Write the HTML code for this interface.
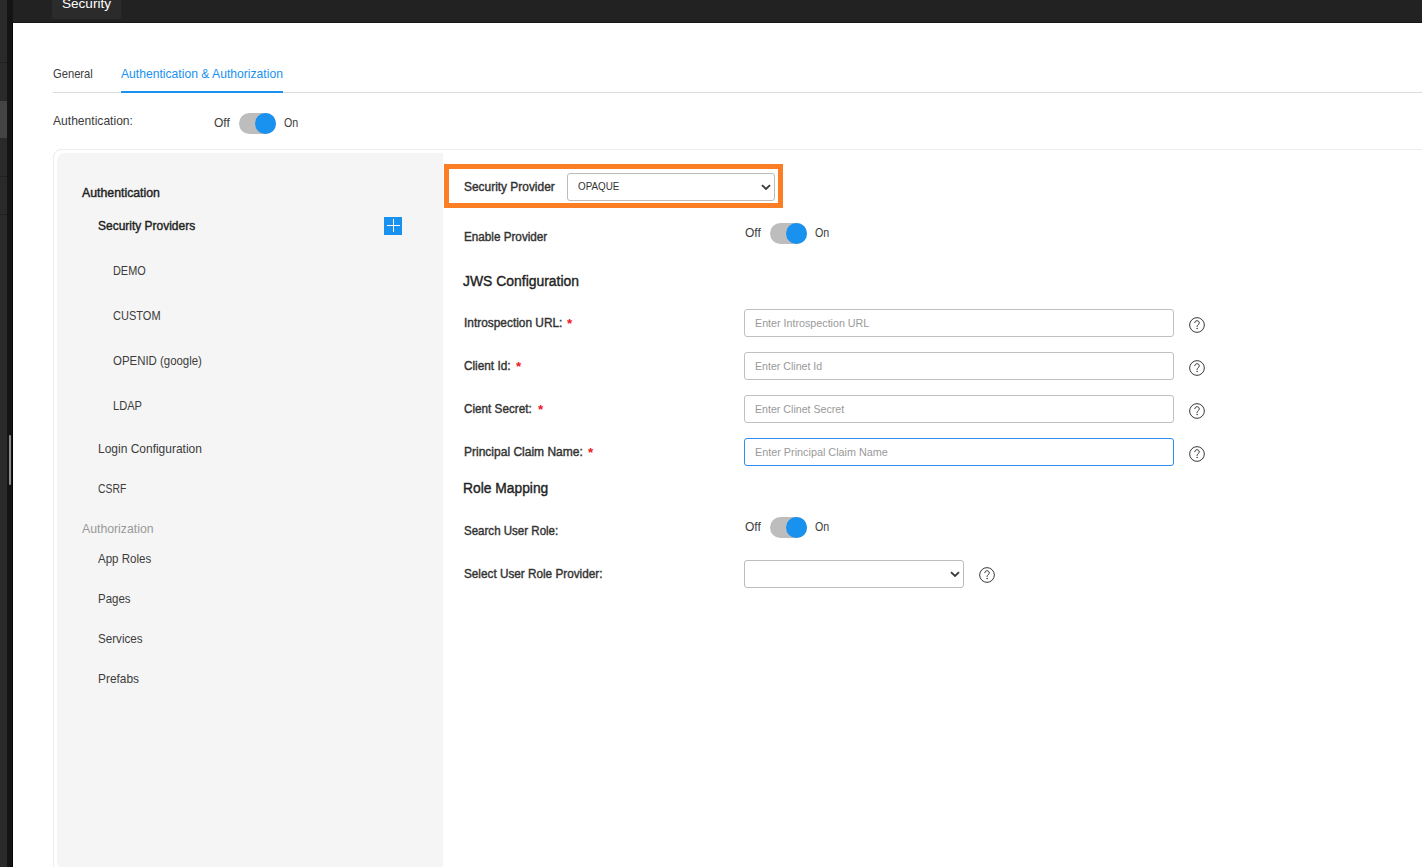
<!DOCTYPE html>
<html><head><meta charset="utf-8"><style>
html,body{margin:0;padding:0;width:1422px;height:867px;overflow:hidden;background:#fff;font-family:"Liberation Sans", sans-serif;}
body>div,body>svg{position:absolute;}
.t{white-space:nowrap;transform-origin:0 0;}
</style></head><body>
<div style="left:0px;top:0px;width:7px;height:867px;background:#2a2a2a"></div>
<div style="left:0px;top:62px;width:7px;height:1px;background:#202020"></div>
<div style="left:0px;top:176px;width:7px;height:1px;background:#202020"></div>
<div style="left:0px;top:214px;width:7px;height:1px;background:#202020"></div>
<div style="left:0px;top:101px;width:7px;height:37px;background:#444"></div>
<div style="left:7px;top:0px;width:6px;height:867px;background:#141414"></div>
<div style="left:12px;top:23px;width:1px;height:844px;background:#050505"></div>
<div style="left:9px;top:435px;width:2px;height:50px;background:#8c8c8c;border-radius:1px"></div>
<div style="left:13px;top:0px;width:1409px;height:23px;background:#222"></div>
<div style="left:13px;top:22px;width:1409px;height:1px;background:#151515"></div>
<div style="left:52px;top:0px;width:69px;height:19px;background:#2b2b2b;border-radius:0 0 2px 2px"></div>
<div class="t" style="left:62.2px;top:-3.68px;font-size:13.5px;line-height:16px;color:#fff;font-weight:normal;transform:scaleX(1.0048);">Security</div>
<div style="left:13px;top:23px;width:1409px;height:844px;background:#fff"></div>
<div class="t" style="left:53.4px;top:63.60px;font-size:12.4px;line-height:20px;color:#3c3c3c;font-weight:normal;transform:scaleX(0.9022);">General</div>
<div class="t" style="left:121px;top:63.70px;font-size:12.4px;line-height:20px;color:#1991ef;font-weight:normal;transform:scaleX(0.9792);">Authentication &amp; Authorization</div>
<div style="left:53px;top:92px;width:1369px;height:1px;background:#dcdcdc"></div>
<div style="left:121px;top:91px;width:162px;height:2px;background:#1991ef"></div>
<div class="t" style="left:53.3px;top:111.40px;font-size:12.4px;line-height:20px;color:#3c3c3c;font-weight:normal;transform:scaleX(0.9752);">Authentication:</div>
<div class="t" style="left:213.6px;top:112.70px;font-size:12.4px;line-height:20px;color:#3c3c3c;font-weight:normal;transform:scaleX(0.9687);">Off</div>
<div style="left:239px;top:113px;width:37px;height:21px;background:#bdbdbd;border-radius:11px"></div>
<div style="left:255px;top:113px;width:21px;height:21px;background:#1991ef;border-radius:50%"></div>
<div class="t" style="left:284px;top:112.70px;font-size:12.4px;line-height:20px;color:#3c3c3c;font-weight:normal;transform:scaleX(0.8585);">On</div>
<div style="left:53px;top:149px;width:1400px;height:724px;border:1px solid #ededed;border-radius:8px;background:#fff;box-sizing:border-box"></div>
<div style="left:57px;top:153px;width:386px;height:716px;background:#f5f5f5;border-radius:8px 0 0 8px"></div>
<div class="t" style="left:82.1px;top:182.60px;font-size:12.4px;line-height:20px;color:#222;font-weight:normal;transform:scaleX(0.9925);-webkit-text-stroke:0.4px #222;">Authentication</div>
<div class="t" style="left:98.1px;top:215.90px;font-size:12.4px;line-height:20px;color:#222;font-weight:normal;transform:scaleX(0.9661);-webkit-text-stroke:0.4px #222;">Security Providers</div>
<div style="left:384px;top:217px;width:18px;height:18px;background:#1991ef"></div>
<div style="left:393px;top:219px;width:1px;height:13px;background:#fff"></div>
<div style="left:387px;top:225px;width:13px;height:1px;background:#fff"></div>
<div class="t" style="left:113.3px;top:260.60px;font-size:12.4px;line-height:20px;color:#3c3c3c;font-weight:normal;transform:scaleX(0.8790);">DEMO</div>
<div class="t" style="left:113.3px;top:305.70px;font-size:12.4px;line-height:20px;color:#3c3c3c;font-weight:normal;transform:scaleX(0.8896);">CUSTOM</div>
<div class="t" style="left:113.3px;top:350.70px;font-size:12.4px;line-height:20px;color:#3c3c3c;font-weight:normal;transform:scaleX(0.9224);">OPENID (google)</div>
<div class="t" style="left:113.3px;top:396.30px;font-size:12.4px;line-height:20px;color:#3c3c3c;font-weight:normal;transform:scaleX(0.8952);">LDAP</div>
<div class="t" style="left:98.1px;top:438.70px;font-size:12.4px;line-height:20px;color:#3c3c3c;font-weight:normal;transform:scaleX(0.9670);">Login Configuration</div>
<div class="t" style="left:98.1px;top:478.50px;font-size:12.4px;line-height:20px;color:#3c3c3c;font-weight:normal;transform:scaleX(0.8384);">CSRF</div>
<div class="t" style="left:82px;top:518.70px;font-size:12.4px;line-height:20px;color:#999;font-weight:normal;transform:scaleX(0.9892);">Authorization</div>
<div class="t" style="left:98.1px;top:548.60px;font-size:12.4px;line-height:20px;color:#3c3c3c;font-weight:normal;transform:scaleX(0.9299);">App Roles</div>
<div class="t" style="left:98.1px;top:588.50px;font-size:12.4px;line-height:20px;color:#3c3c3c;font-weight:normal;transform:scaleX(0.9272);">Pages</div>
<div class="t" style="left:98.1px;top:629.30px;font-size:12.4px;line-height:20px;color:#3c3c3c;font-weight:normal;transform:scaleX(0.9380);">Services</div>
<div class="t" style="left:98.1px;top:668.50px;font-size:12.4px;line-height:20px;color:#3c3c3c;font-weight:normal;transform:scaleX(0.9594);">Prefabs</div>
<div style="left:444px;top:164px;width:339px;height:44px;border:5px solid #fc7e24;box-sizing:border-box;background:#fff"></div>
<div class="t" style="left:463.5px;top:177.10px;font-size:12.4px;line-height:20px;color:#333;font-weight:normal;transform:scaleX(0.9617);-webkit-text-stroke:0.4px #333;">Security Provider</div>
<div style="left:567px;top:173px;width:208px;height:28px;border:1px solid #bcbcbc;border-radius:3px;box-sizing:border-box;background:#fff"></div>
<div class="t" style="left:578.3px;top:175.98px;font-size:11.6px;line-height:20px;color:#333;font-weight:normal;transform:scaleX(0.8488);">OPAQUE</div>
<svg style="left:760px;top:183px" width="12" height="9" viewBox="0 0 12 9"><path d="M2 2.1 L6 6 L10 2.1" fill="none" stroke="#383838" stroke-width="1.8"/></svg>
<div class="t" style="left:463.5px;top:227.10px;font-size:12.4px;line-height:20px;color:#333;font-weight:normal;transform:scaleX(0.9441);-webkit-text-stroke:0.4px #333;">Enable Provider</div>
<div class="t" style="left:744.7px;top:222.50px;font-size:12.4px;line-height:20px;color:#3c3c3c;font-weight:normal;transform:scaleX(0.9687);">Off</div>
<div style="left:770px;top:223px;width:37px;height:21px;background:#bdbdbd;border-radius:11px"></div>
<div style="left:786px;top:223px;width:21px;height:21px;background:#1991ef;border-radius:50%"></div>
<div class="t" style="left:815px;top:222.50px;font-size:12.4px;line-height:20px;color:#3c3c3c;font-weight:normal;transform:scaleX(0.8585);">On</div>
<div class="t" style="left:463.2px;top:270.63px;font-size:15.5px;line-height:20px;color:#222;font-weight:normal;transform:scaleX(0.8977);-webkit-text-stroke:0.4px #222;">JWS Configuration</div>
<div class="t" style="left:463.5px;top:312.50px;font-size:12.4px;line-height:20px;color:#333;font-weight:normal;transform:scaleX(0.9591);-webkit-text-stroke:0.4px #333;">Introspection URL:</div>
<div class="t" style="left:567px;top:313.70px;font-size:13px;line-height:20px;color:#f0141b;font-weight:bold;transform:scaleX(1.0279);">*</div>
<div style="left:744px;top:309px;width:430px;height:28px;border:1px solid #c0c0c0;border-radius:3px;box-sizing:border-box;background:#fff"></div>
<div class="t" style="left:755px;top:312.82px;font-size:11.5px;line-height:20px;color:#9a9a9a;font-weight:normal;transform:scaleX(0.9313);">Enter Introspection URL</div>
<svg style="left:1189px;top:317px" width="16" height="16" viewBox="0 0 16 16"><circle cx="8" cy="8" r="7.35" fill="none" stroke="#383838" stroke-width="1"/><path d="M5.8 6.1 C5.8 4.6 6.8 3.7 8 3.7 C9.3 3.7 10.3 4.6 10.3 5.9 C10.3 7.5 8.1 7.6 8.1 9.6 L8.1 10" fill="none" stroke="#383838" stroke-width="1"/><circle cx="8.1" cy="11.6" r="0.75" fill="#383838"/></svg>
<div class="t" style="left:463.5px;top:355.50px;font-size:12.4px;line-height:20px;color:#333;font-weight:normal;transform:scaleX(0.9503);-webkit-text-stroke:0.4px #333;">Client Id:</div>
<div class="t" style="left:516px;top:356.70px;font-size:13px;line-height:20px;color:#f0141b;font-weight:bold;transform:scaleX(1.0279);">*</div>
<div style="left:744px;top:352px;width:430px;height:28px;border:1px solid #c0c0c0;border-radius:3px;box-sizing:border-box;background:#fff"></div>
<div class="t" style="left:755px;top:355.82px;font-size:11.5px;line-height:20px;color:#9a9a9a;font-weight:normal;transform:scaleX(0.9222);">Enter Clinet Id</div>
<svg style="left:1189px;top:360px" width="16" height="16" viewBox="0 0 16 16"><circle cx="8" cy="8" r="7.35" fill="none" stroke="#383838" stroke-width="1"/><path d="M5.8 6.1 C5.8 4.6 6.8 3.7 8 3.7 C9.3 3.7 10.3 4.6 10.3 5.9 C10.3 7.5 8.1 7.6 8.1 9.6 L8.1 10" fill="none" stroke="#383838" stroke-width="1"/><circle cx="8.1" cy="11.6" r="0.75" fill="#383838"/></svg>
<div class="t" style="left:463.5px;top:398.50px;font-size:12.4px;line-height:20px;color:#333;font-weight:normal;transform:scaleX(0.9445);-webkit-text-stroke:0.4px #333;">Cient Secret:</div>
<div class="t" style="left:537.5px;top:399.70px;font-size:13px;line-height:20px;color:#f0141b;font-weight:bold;transform:scaleX(1.0279);">*</div>
<div style="left:744px;top:395px;width:430px;height:28px;border:1px solid #c0c0c0;border-radius:3px;box-sizing:border-box;background:#fff"></div>
<div class="t" style="left:755px;top:398.82px;font-size:11.5px;line-height:20px;color:#9a9a9a;font-weight:normal;transform:scaleX(0.9242);">Enter Clinet Secret</div>
<svg style="left:1189px;top:403px" width="16" height="16" viewBox="0 0 16 16"><circle cx="8" cy="8" r="7.35" fill="none" stroke="#383838" stroke-width="1"/><path d="M5.8 6.1 C5.8 4.6 6.8 3.7 8 3.7 C9.3 3.7 10.3 4.6 10.3 5.9 C10.3 7.5 8.1 7.6 8.1 9.6 L8.1 10" fill="none" stroke="#383838" stroke-width="1"/><circle cx="8.1" cy="11.6" r="0.75" fill="#383838"/></svg>
<div class="t" style="left:463.5px;top:441.50px;font-size:12.4px;line-height:20px;color:#333;font-weight:normal;transform:scaleX(0.9693);-webkit-text-stroke:0.4px #333;">Principal Claim Name:</div>
<div class="t" style="left:587.5px;top:442.70px;font-size:13px;line-height:20px;color:#f0141b;font-weight:bold;transform:scaleX(1.0279);">*</div>
<div style="left:744px;top:438px;width:430px;height:28px;border:1px solid #2c8ef0;border-radius:3px;box-sizing:border-box;background:#fff"></div>
<div class="t" style="left:755px;top:441.82px;font-size:11.5px;line-height:20px;color:#9a9a9a;font-weight:normal;transform:scaleX(0.9409);">Enter Principal Claim Name</div>
<svg style="left:1189px;top:446px" width="16" height="16" viewBox="0 0 16 16"><circle cx="8" cy="8" r="7.35" fill="none" stroke="#383838" stroke-width="1"/><path d="M5.8 6.1 C5.8 4.6 6.8 3.7 8 3.7 C9.3 3.7 10.3 4.6 10.3 5.9 C10.3 7.5 8.1 7.6 8.1 9.6 L8.1 10" fill="none" stroke="#383838" stroke-width="1"/><circle cx="8.1" cy="11.6" r="0.75" fill="#383838"/></svg>
<div class="t" style="left:463.2px;top:477.63px;font-size:15.5px;line-height:20px;color:#222;font-weight:normal;transform:scaleX(0.8918);-webkit-text-stroke:0.4px #222;">Role Mapping</div>
<div class="t" style="left:463.5px;top:521.40px;font-size:12.4px;line-height:20px;color:#333;font-weight:normal;transform:scaleX(0.9308);-webkit-text-stroke:0.4px #333;">Search User Role:</div>
<div class="t" style="left:744.7px;top:517.30px;font-size:12.4px;line-height:20px;color:#3c3c3c;font-weight:normal;transform:scaleX(0.9687);">Off</div>
<div style="left:770px;top:517px;width:37px;height:21px;background:#bdbdbd;border-radius:11px"></div>
<div style="left:786px;top:517px;width:21px;height:21px;background:#1991ef;border-radius:50%"></div>
<div class="t" style="left:815px;top:517.30px;font-size:12.4px;line-height:20px;color:#3c3c3c;font-weight:normal;transform:scaleX(0.8585);">On</div>
<div class="t" style="left:463.5px;top:563.50px;font-size:12.4px;line-height:20px;color:#333;font-weight:normal;transform:scaleX(0.9480);-webkit-text-stroke:0.4px #333;">Select User Role Provider:</div>
<div style="left:744px;top:560px;width:220px;height:28px;border:1px solid #bdbdbd;border-radius:3px;box-sizing:border-box;background:#fff"></div>
<svg style="left:949px;top:570.1px" width="12" height="9" viewBox="0 0 12 9"><path d="M2 2.1 L6 6 L10 2.1" fill="none" stroke="#383838" stroke-width="1.8"/></svg>
<svg style="left:979px;top:566.7px" width="16" height="16" viewBox="0 0 16 16"><circle cx="8" cy="8" r="7.35" fill="none" stroke="#383838" stroke-width="1"/><path d="M5.8 6.1 C5.8 4.6 6.8 3.7 8 3.7 C9.3 3.7 10.3 4.6 10.3 5.9 C10.3 7.5 8.1 7.6 8.1 9.6 L8.1 10" fill="none" stroke="#383838" stroke-width="1"/><circle cx="8.1" cy="11.6" r="0.75" fill="#383838"/></svg>
</body></html>
